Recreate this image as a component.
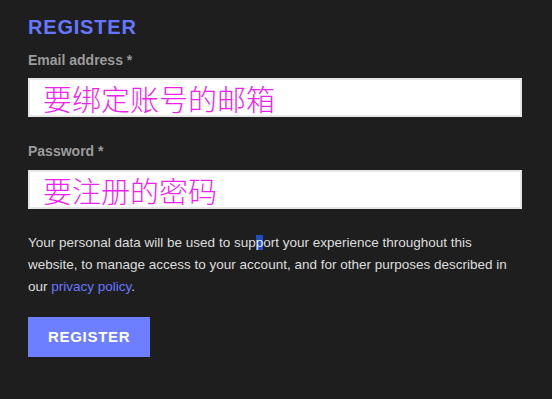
export default function App() {
  const font = "font-['Liberation_Sans','Noto_Sans_CJK_SC',sans-serif]";
  // Input boxes look the same, only the text inside changes
  const inputBox =
    "h-[39px] w-full overflow-hidden border-2 border-[#e6e6e6] bg-white pl-[13px] text-[29px] font-light leading-[39px] text-[#f01ff0] whitespace-nowrap";

  return (
    <div className={`min-h-[399px] w-full bg-[#1e1e1e] px-[28px] pt-[15px] ${font}`}>
      <div className="w-[494px]">
        <h2 className="text-[20px] font-bold uppercase leading-[24px] tracking-[0.8px] text-[#6677ff]">
          Register
        </h2>
        <form className="mt-[11px]" onSubmit={(e) => e.preventDefault()}>
          <label className="block text-[14px] font-bold leading-[20px] text-[#9b9b9b]">
            Email address *
          </label>
          <div className={`mt-[8px] ${inputBox}`}>
            <span className="relative top-[2px]">要绑定账号的邮箱</span>
          </div>

          <label className="mt-[24px] block text-[14px] font-bold leading-[20px] text-[#9b9b9b]">
            Password *
          </label>
          <div className={`mt-[9px] ${inputBox}`}>
            <span className="relative top-[2px]">要注册的密码</span>
          </div>

          <p className="mt-[23px] text-[13.5px] leading-[22px] text-[#dedede]">
            Your personal data will be used to sup
            <span className="bg-[#1f4fc0] text-[#e8f0ff]">p</span>
            ort your experience throughout this website, to manage access to your
            account, and for other purposes described in our{" "}
            <a href="#" className="text-[#6677ff]">
              privacy policy
            </a>
            .
          </p>

          <button
            type="submit"
            className="mt-[19px] h-[40px] bg-[#6d7ffe] px-[20px] text-[15px] font-bold uppercase tracking-[0.7px] text-white"
          >
            Register
          </button>
        </form>
      </div>
    </div>
  );
}
